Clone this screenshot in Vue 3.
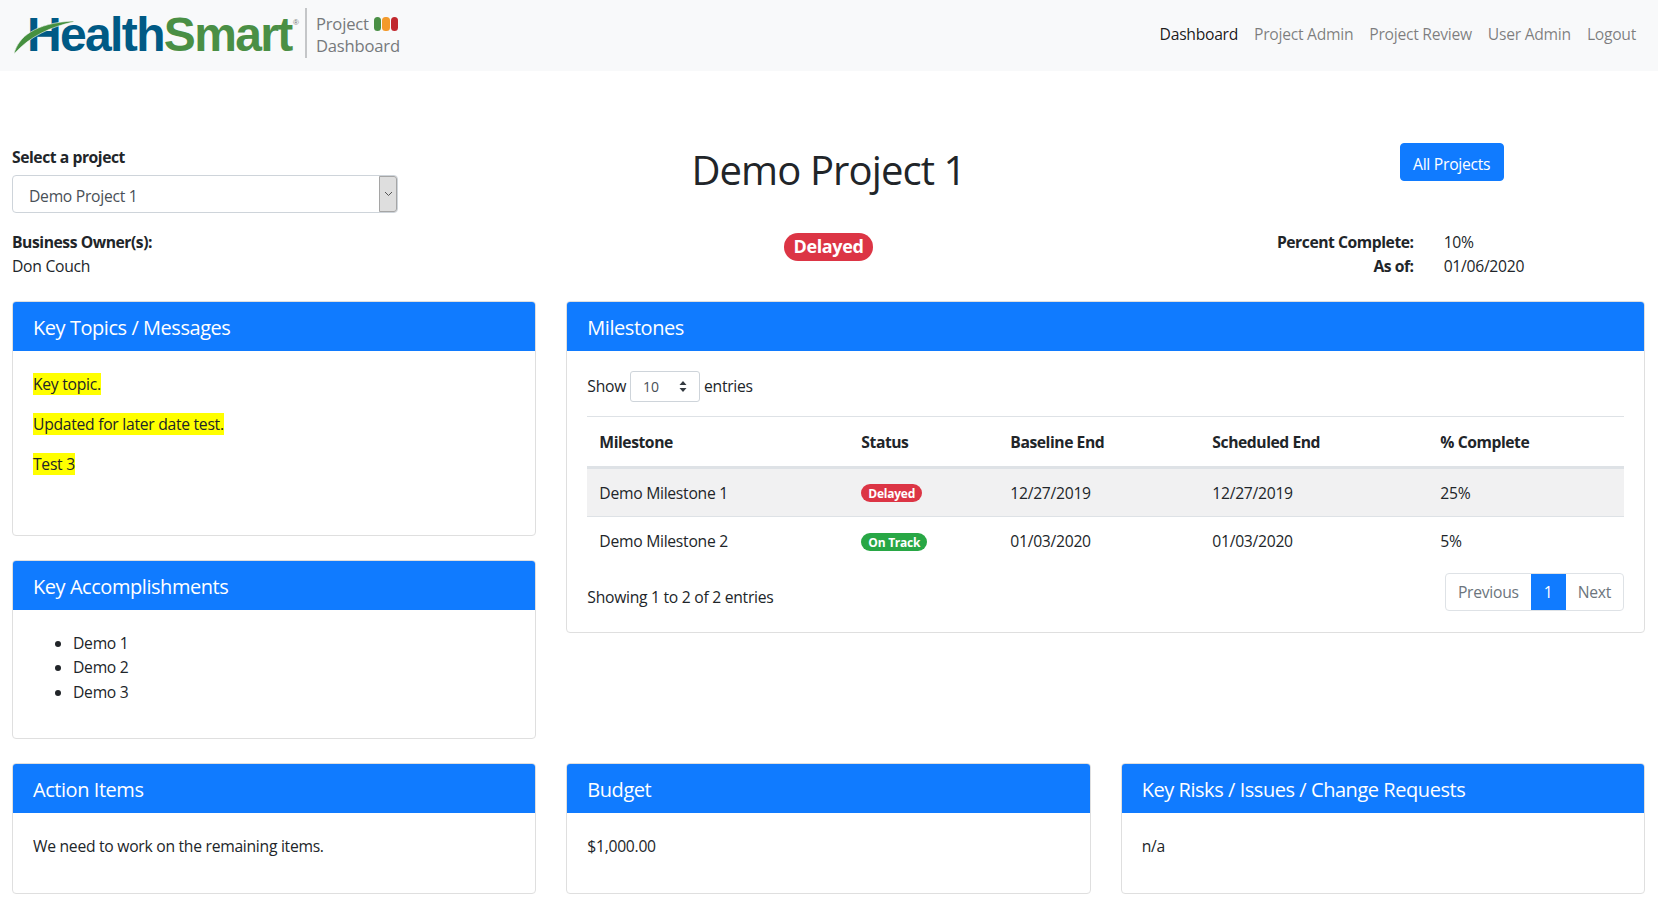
<script setup>
// Project dashboard page: nav bar, project summary, and the report cards.
const navLinks = [
  { label: "Dashboard", active: true },
  { label: "Project Admin" },
  { label: "Project Review" },
  { label: "User Admin" },
  { label: "Logout" },
];

const topics = ["Key topic.", "Updated for later date test.", "Test 3"];
const accomplishments = ["Demo 1", "Demo 2", "Demo 3"];

const columns = ["Milestone", "Status", "Baseline End", "Scheduled End", "% Complete"];
const milestones = [
  { name: "Demo Milestone 1", status: "Delayed", tone: "red", baseline: "12/27/2019", scheduled: "12/27/2019", pct: "25%" },
  { name: "Demo Milestone 2", status: "On Track", tone: "green", baseline: "01/03/2020", scheduled: "01/03/2020", pct: "5%" },
];

const bottomCards = [
  { title: "Action Items", text: "We need to work on the remaining items." },
  { title: "Budget", text: "$1,000.00" },
  { title: "Key Risks / Issues / Change Requests", text: "n/a" },
];
</script>

<template>
  <nav class="navbar">
    <a class="brand">
      <span class="logo">
        <svg class="swoosh" width="62" height="36" viewBox="0 0 62 36">
          <path d="M1 35C5 18 22 4 60 2C61 2 61 3 60 3C38 8 17 17 1 35Z" fill="#46903f" stroke="#f8f9fa" stroke-width="0.6" />
        </svg>
        <span class="logo-blue">Health</span><span class="logo-green">Smart</span><sup class="reg">®</sup>
      </span>
      <span class="brand-sub">
        <span class="sub-line">Project
          <span class="lights"><i class="l-green"></i><i class="l-orange"></i><i class="l-red"></i></span>
        </span>
        <span class="sub-line">Dashboard</span>
      </span>
    </a>
    <div class="nav-links">
      <a v-for="link in navLinks" :key="link.label" class="nav-link" :class="{ active: link.active }">{{ link.label }}</a>
    </div>
  </nav>

  <main class="page">
    <section class="summary">
      <div class="picker">
        <label class="picker-label" for="project">Select a project</label>
        <div class="select-wrap">
          <select id="project" class="project-select">
            <option>Demo Project 1</option>
          </select>
          <span class="select-arrow">
            <svg width="9" height="6" viewBox="0 0 9 6"><path d="M1 1l3.5 3.5L8 1" fill="none" stroke="#555" stroke-width="1" /></svg>
          </span>
        </div>
      </div>
      <h1 class="title">Demo Project 1</h1>
      <div class="all-wrap"><button class="btn-all">All Projects</button></div>

      <div class="owner">
        <strong>Business Owner(s):</strong>
        <div>Don Couch</div>
      </div>
      <div class="status"><span class="pill pill-lg red">Delayed</span></div>
      <dl class="progress">
        <dt>Percent Complete:</dt><dd>10%</dd>
        <dt>As of:</dt><dd>01/06/2020</dd>
      </dl>
    </section>

    <section class="columns">
      <div class="left-stack">
        <article class="card">
          <h5 class="card-header">Key Topics / Messages</h5>
          <div class="card-body topics">
            <p v-for="t in topics" :key="t"><mark>{{ t }}</mark></p>
          </div>
        </article>
        <article class="card">
          <h5 class="card-header">Key Accomplishments</h5>
          <div class="card-body">
            <ul>
              <li v-for="a in accomplishments" :key="a">{{ a }}</li>
            </ul>
          </div>
        </article>
      </div>

      <article class="card milestones">
        <h5 class="card-header">Milestones</h5>
        <div class="card-body">
          <div class="length">
            <span>Show</span>
            <div class="length-wrap">
              <select class="length-select"><option>10</option></select>
              <svg class="updown" width="8" height="11" viewBox="0 0 8 11"><path d="M4 0l3.5 4h-7zM4 11l3.5-4h-7z" fill="#343a40" /></svg>
            </div>
            <span>entries</span>
          </div>
          <table class="grid">
            <thead>
              <tr><th v-for="c in columns" :key="c">{{ c }}</th></tr>
            </thead>
            <tbody>
              <tr v-for="m in milestones" :key="m.name">
                <td>{{ m.name }}</td>
                <td><span class="pill" :class="m.tone">{{ m.status }}</span></td>
                <td>{{ m.baseline }}</td>
                <td>{{ m.scheduled }}</td>
                <td>{{ m.pct }}</td>
              </tr>
            </tbody>
          </table>
          <div class="table-foot">
            <span>Showing 1 to 2 of 2 entries</span>
            <div class="pager">
              <a class="page-btn">Previous</a>
              <a class="page-btn current">1</a>
              <a class="page-btn">Next</a>
            </div>
          </div>
        </div>
      </article>
    </section>

    <section class="bottom">
      <article v-for="c in bottomCards" :key="c.title" class="card">
        <h5 class="card-header">{{ c.title }}</h5>
        <div class="card-body"><p>{{ c.text }}</p></div>
      </article>
    </section>
  </main>
</template>

<style>
body {
  background: #fff;
}
</style>

<style scoped>
.navbar,
.page {
  font-family: "Open Sans", "Noto Sans", sans-serif;
  font-size: 15.7px;
  line-height: 24px;
  letter-spacing: -0.28px;
  color: #212529;
}

strong,
dt,
th,
.picker-label {
  letter-spacing: -0.45px;
}

.navbar {
  display: flex;
  align-items: center;
  justify-content: space-between;
  height: 71px;
  padding: 0 14px 0 13px;
  background: #f8f9fa;
}

.brand {
  display: flex;
  align-items: center;
  margin-top: -2px;
}

.logo {
  position: relative;
  display: block;
  width: 278px;
  padding-left: 14px;
  font-family: "Liberation Sans", Arial, sans-serif;
  font-weight: 700;
  font-size: 48px;
  line-height: 50px;
  letter-spacing: -1.65px;
  white-space: nowrap;
}

.logo-blue {
  color: #005a85;
}

.logo-green {
  color: #4a8f45;
}

.reg {
  position: absolute;
  top: 9px;
  left: 280px;
  font-size: 8px;
  line-height: 8px;
  font-weight: 400;
  letter-spacing: 0;
  color: #777;
}

.swoosh {
  position: absolute;
  left: 0;
  top: 9px;
}

.brand-sub {
  display: flex;
  flex-direction: column;
  box-sizing: border-box;
  height: 50px;
  margin-top: -4px;
  padding: 5px 0 0 9px;
  border-left: 2px solid #c4c6c8;
  color: #76797c;
  font-size: 16.6px;
  line-height: 22px;
  letter-spacing: -0.2px;
}

.sub-line {
  display: flex;
  align-items: center;
  gap: 5px;
}

.lights {
  display: inline-flex;
  gap: 1px;
}

.lights i {
  display: block;
  width: 7.5px;
  height: 14px;
  border-radius: 3.5px;
}

.l-green { background: #4a8f45; }
.l-orange { background: #f39a2b; }
.l-red { background: #c1272d; }

.nav-links {
  display: flex;
  margin-top: -4px;
}

.nav-link {
  padding: 8px;
  color: rgba(0, 0, 0, 0.5);
}

.nav-link.active {
  color: rgba(0, 0, 0, 0.9);
}

.page {
  padding: 0 13px 6px 12px;
}

.summary {
  display: grid;
  grid-template-columns: repeat(3, 1fr);
  column-gap: 30px;
  padding-top: 72px;
  margin-bottom: 23px;
}

.picker-label {
  display: block;
  font-weight: 700;
  margin: 2px 0 6px;
}

.select-wrap {
  position: relative;
  width: 386px;
  height: 38px;
}

.project-select {
  appearance: none;
  width: 100%;
  height: 100%;
  padding: 3px 16px 0;
  border: 1px solid #ced4da;
  border-radius: 4px;
  background: #fff;
  color: #495057;
  font: inherit;
  letter-spacing: inherit;
}

.select-arrow {
  position: absolute;
  top: 1px;
  right: 1px;
  bottom: 1px;
  width: 16px;
  display: flex;
  align-items: center;
  justify-content: center;
  background: #dedede;
  border: 1px solid #a5a5a5;
  border-radius: 0 3px 3px 0;
}

.title {
  margin: 0;
  font-size: 40px;
  line-height: 48px;
  font-weight: 400;
  text-align: center;
  letter-spacing: -0.9px;
  padding-top: 3px;
}

.all-wrap {
  padding-left: 279px;
}

.btn-all {
  height: 38px;
  width: 104px;
  padding: 3px 0 0;
  border: 1px solid #107bff;
  border-radius: 4px;
  background: #107bff;
  color: #fff;
  font: inherit;
  letter-spacing: inherit;
}

.owner {
  margin-top: 17px;
}

.owner strong {
  font-weight: 700;
}

.status {
  margin-top: 20px;
  text-align: center;
}

.pill {
  display: inline-block;
  height: 18px;
  margin-top: -2px;
  padding: 0 7px;
  border-radius: 10px;
  color: #fff;
  font-size: 12px;
  line-height: 19px;
  font-weight: 700;
  letter-spacing: -0.25px;
  vertical-align: middle;
}

.pill-lg {
  height: 28px;
  margin-top: 0;
  padding: 0 9.5px;
  border-radius: 14px;
  font-size: 18px;
  line-height: 27px;
  letter-spacing: -0.35px;
}

.red { background: #dc3545; }
.green { background: #28a745; }

.progress {
  display: grid;
  grid-template-columns: 293px 1fr;
  column-gap: 30px;
  margin: 17px 0 0;
}

.progress dt {
  text-align: right;
  font-weight: 700;
}

.progress dd {
  margin: 0;
}

.columns {
  display: grid;
  grid-template-columns: repeat(3, 1fr);
  column-gap: 30px;
  align-items: start;
  margin-bottom: 24px;
}

.milestones {
  grid-column: span 2;
}

.left-stack {
  display: flex;
  flex-direction: column;
  gap: 24px;
}

.card {
  border: 1px solid #dfdfdf;
  border-radius: 4px;
  overflow: hidden;
  background: #fff;
}

.card-header {
  margin: 0;
  height: 49px;
  padding: 1px 20px 0;
  background: #107bff;
  color: #fff;
  font-size: 20px;
  line-height: 49px;
  font-weight: 400;
  letter-spacing: -0.45px;
  box-sizing: border-box;
}

.card-body {
  padding: 20px;
}

.card-body p {
  margin: 0 0 15px;
}

.bottom .card-body {
  padding-top: 21px;
}

.topics {
  padding-top: 21px;
  padding-bottom: 43px;
}

.topics p {
  margin-bottom: 16px;
}

mark {
  background: #ffff00;
  color: inherit;
}

ul {
  margin: 1px 0 14px;
  padding-left: 40px;
}

li {
  line-height: 24.4px;
}

.length {
  display: flex;
  align-items: center;
  gap: 4px;
  height: 31px;
}

.length > span {
  padding-bottom: 2px;
}

.length-wrap {
  position: relative;
  width: 70px;
  height: 31px;
}

.length-select {
  appearance: none;
  width: 100%;
  height: 100%;
  padding: 0 12px;
  border: 1px solid #ced4da;
  border-radius: 3px;
  background: #fff;
  color: #495057;
  font-family: inherit;
  font-size: 14px;
}

.updown {
  position: absolute;
  right: 13px;
  top: 10px;
}

.grid {
  width: 100%;
  border-collapse: collapse;
  table-layout: fixed;
  margin-top: 14px;
}

.grid th:nth-child(1) { width: 262px; }
.grid th:nth-child(2) { width: 149px; }
.grid th:nth-child(3) { width: 202px; }
.grid th:nth-child(4) { width: 228px; }

.grid th,
.grid td {
  box-sizing: border-box;
  padding: 0 12px;
  text-align: left;
}

.grid th {
  height: 51px;
  padding-top: 1px;
  border-top: 1px solid #dee2e6;
  border-bottom: 3px solid #dee2e6;
  font-weight: 700;
}

.grid td {
  height: 49px;
}

.grid tbody tr:first-child td {
  height: 49px;
  background: #f1f1f2;
  border-bottom: 1px solid #dee2e6;
}

.table-foot {
  display: flex;
  align-items: flex-end;
  justify-content: space-between;
  margin-top: 7px;
  margin-bottom: 1px;
}

.table-foot > span {
  padding-bottom: 2px;
}

.pager {
  display: flex;
  box-sizing: border-box;
  height: 38px;
  border: 1px solid #dee2e6;
  border-radius: 4px;
  overflow: hidden;
}

.page-btn {
  padding: 0 12px;
  line-height: 37px;
  color: #6c757d;
}

.page-btn.current {
  width: 35px;
  box-sizing: border-box;
  text-align: center;
  background: #107bff;
  color: #fff;
}

.bottom {
  display: grid;
  grid-template-columns: repeat(3, 1fr);
  column-gap: 30px;
}
</style>
